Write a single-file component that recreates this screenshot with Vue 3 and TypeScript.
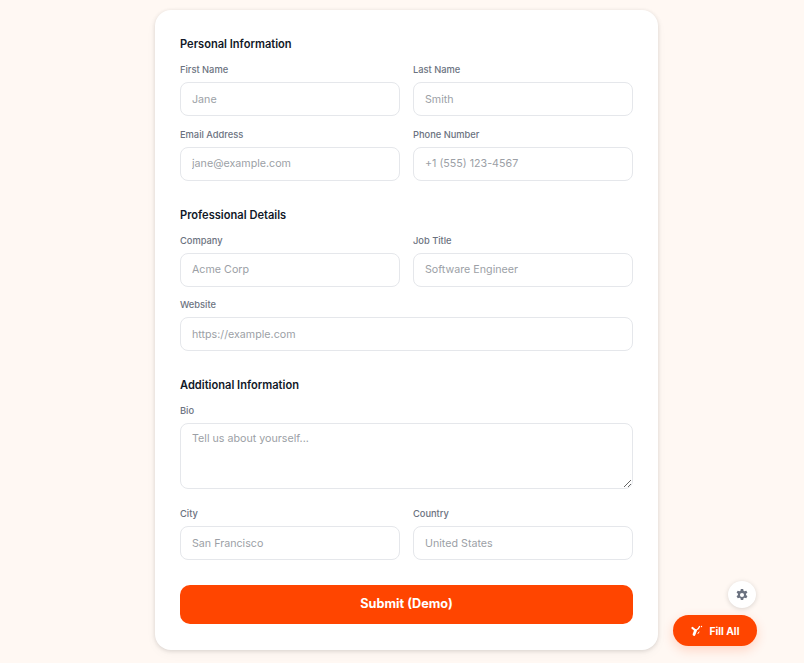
<script setup lang="ts">
interface Field { label: string; placeholder: string; wide?: boolean }
interface Section { title: string; fields: Field[] }
const sections: Section[] = [
  { title: 'Personal Information', fields: [
    { label: 'First Name', placeholder: 'Jane' },
    { label: 'Last Name', placeholder: 'Smith' },
    { label: 'Email Address', placeholder: 'jane@example.com' },
    { label: 'Phone Number', placeholder: '+1 (555) 123-4567' },
  ] },
  { title: 'Professional Details', fields: [
    { label: 'Company', placeholder: 'Acme Corp' },
    { label: 'Job Title', placeholder: 'Software Engineer' },
    { label: 'Website', placeholder: 'https://example.com', wide: true },
  ] },
]
const tail: Field[] = [
  { label: 'City', placeholder: 'San Francisco' },
  { label: 'Country', placeholder: 'United States' },
]
</script>

<template>
  <div class="page">
    <form class="card" @submit.prevent>
      <section v-for="s in sections" :key="s.title" class="section">
        <h2>{{ s.title }}</h2>
        <div class="grid">
          <label v-for="f in s.fields" :key="f.label" class="field" :class="{ wide: f.wide }">
            <span>{{ f.label }}</span>
            <input :placeholder="f.placeholder" />
          </label>
        </div>
      </section>
      <section class="section">
        <h2>Additional Information</h2>
        <div class="grid">
          <label class="field wide bio">
            <span>Bio</span>
            <textarea placeholder="Tell us about yourself..."></textarea>
          </label>
          <label v-for="f in tail" :key="f.label" class="field">
            <span>{{ f.label }}</span>
            <input :placeholder="f.placeholder" />
          </label>
        </div>
      </section>
      <button class="submit" type="submit">Submit (Demo)</button>
    </form>
    <button class="gear" type="button" aria-label="Settings">
      <svg width="14" height="14" viewBox="0 0 24 24" fill="#6b7280" fill-rule="evenodd">
        <path d="M10 1.5h4l.6 3.1c.6.2 1.2.5 1.7.9l3-1 2 3.4-2.4 2.1a8 8 0 0 1 0 2l2.4 2.1-2 3.4-3-1c-.5.4-1.1.7-1.700.9l-.6 3.100h-4l-.6-3.100c-.6-.2-1.200-.5-1.700-.9l-3 1-2-3.400 2.400-2.100a8 8 0 0 1 0-2L2.700 7.900l2-3.400 3 1c.5-.4 1.100-.7 1.700-.9zM12 8.500a3.500 3.500 0 1 0 0 7 3.500 3.500 0 0 0 0-7z"/>
      </svg>
    </button>
    <button class="fill" type="button">
      <svg width="12" height="12" viewBox="0 0 12 12" fill="none" stroke="#fff" stroke-linecap="round">
        <path d="M1.500 3 4.500 5.500" stroke-width="2.200"/>
        <path d="M4.500 5.500 3 9.500" stroke-width="2.800"/>
        <path d="M5.500 5C7 4.500 8 3 8.500 1.500" stroke-width="1.300"/>
        <path d="M7 8.500 8 7" stroke-width="1"/>
        <circle cx="10.500" cy="1.500" r=".7" fill="#fff" stroke="none"/>
      </svg>
      Fill All
    </button>
  </div>
</template>

<style>
html, body { margin: 0; background: #fff8f3; }
</style>

<style scoped>
.page {
  position: relative;
  height: 663px;
  overflow: hidden;
  font-family: "Inter", "Liberation Sans", sans-serif;
  box-sizing: border-box;
  padding-top: 10px;
}
.card {
  box-sizing: border-box;
  width: 503px;
  margin-left: 155px;
  height: 640px;
  padding: 25px;
  background: #fff;
  border-radius: 16px;
  box-shadow: 0 1px 4px rgba(0, 0, 0, 0.14), 0 4px 12px rgba(0, 0, 0, 0.03);
}
.section { margin-bottom: 25px; }
h2 {
  margin: 0 0 10px;
  font-size: 11.100px;
  line-height: 18px;
  font-weight: 600;
  color: #111827;
}
.grid { display: grid; grid-template-columns: 220px 220px; column-gap: 13px; row-gap: 11.500px; }
.field { display: flex; flex-direction: column; }
.field.wide { grid-column: 1 / -1; }
.bio { margin-bottom: 6.500px; }
.field span {
  font-size: 9.300px;
  line-height: 14px;
  font-weight: 500;
  color: #6b7280;
  margin-bottom: 5px;
}
input, textarea {
  box-sizing: border-box;
  width: 100%;
  height: 34px;
  padding: 0 11px;
  border: 1px solid #e5e7eb;
  border-radius: 8px;
  background: #fff;
  font: inherit;
  font-size: 10.700px;
  color: #111827;
  outline: none;
}
textarea { display: block; height: 66px; padding: 8px 11px; }
input::placeholder, textarea::placeholder { color: #9c9fa6; }
.submit {
  display: block;
  width: 453px;
  height: 39px;
  padding: 0 0 2px;
  border: 0;
  border-radius: 10px;
  background: #ff4500;
  color: #fff;
  font: inherit;
  font-size: 12.700px;
  font-weight: 700;
}
.gear {
  position: absolute;
  left: 728px;
  top: 581px;
  width: 28px;
  height: 27px;
  padding: 0;
  border: 0;
  border-radius: 50%;
  background: #fff;
  box-shadow: 0 1px 5px rgba(0, 0, 0, 0.15);
  display: flex;
  align-items: center;
  justify-content: center;
}
.fill {
  position: absolute;
  left: 673px;
  top: 615px;
  width: 84px;
  height: 31px;
  padding: 0;
  border: 0;
  border-radius: 16px;
  background: #ff4500;
  color: #fff;
  font: inherit;
  font-size: 10.200px;
  font-weight: 700;
  box-shadow: 0 4px 12px rgba(255, 69, 0, 0.2);
  display: flex;
  align-items: center;
  justify-content: center;
  gap: 7px;
}
</style>
